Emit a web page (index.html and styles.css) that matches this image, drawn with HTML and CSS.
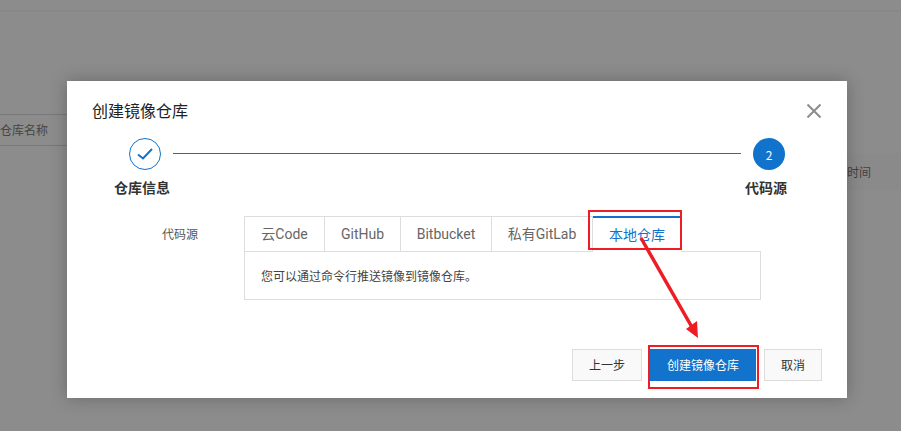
FILE: index.html
```html
<!DOCTYPE html>
<html lang="zh-CN">
<head>
<meta charset="utf-8">
<title>创建镜像仓库</title>
<link rel="stylesheet" href="styles.css">
</head>
<body>
<div class="page">
  <div class="page-top"></div>
  <div class="table-head">
    <span class="col-name">仓库名称</span>
  </div>
  <div class="table-row">
    <span class="col-time">时间</span>
  </div>
</div>
<div class="mask"></div>
<section class="modal">
  <header class="modal-head">
    <h1 class="modal-title">创建镜像仓库</h1>
    <svg class="close" width="14" height="14" viewBox="0 0 14 14"><path d="M0.5 0.5L13.5 13.5M13.5 0.5L0.5 13.5" fill="none" stroke="#8c8c8c" stroke-width="2"/></svg>
  </header>
  <div class="steps">
    <div class="step step-first">
      <div class="dot dot-done">
        <svg width="16" height="12" viewBox="0 0 16 12"><path d="M1 6.5L6 10.5L15 1" fill="none" stroke="#1173cb" stroke-width="2"/></svg>
      </div>
      <div class="step-name">仓库信息</div>
    </div>
    <div class="step-line"></div>
    <div class="step step-last">
      <div class="dot dot-now">2</div>
      <div class="step-name">代码源</div>
    </div>
  </div>
  <div class="form-row">
    <div class="form-label">代码源</div>
    <div class="form-main">
      <div class="tabs">
        <div class="tab">云Code</div>
        <div class="tab">GitHub</div>
        <div class="tab">Bitbucket</div>
        <div class="tab">私有GitLab</div>
        <div class="tab tab-active">本地仓库</div>
      </div>
      <div class="tab-panel">您可以通过命令行推送镜像到镜像仓库。</div>
    </div>
  </div>
  <footer class="modal-foot">
    <button class="btn">上一步</button>
    <button class="btn btn-primary">创建镜像仓库</button>
    <button class="btn">取消</button>
  </footer>
</section>
<div class="mark mark-tab"></div>
<div class="mark mark-btn"></div>
<svg class="arrow" width="901" height="431" viewBox="0 0 901 431">
  <path d="M641 238L693 329" fill="none" stroke="#ee1c25" stroke-width="3.5"/>
  <path d="M698 338L686 329L697 321Z" fill="#ee1c25"/>
</svg>
</body>
</html>
```
FILE: styles.css
```css
* { box-sizing: border-box; }
html, body { margin: 0; padding: 0; }
body {
  width: 901px;
  height: 431px;
  overflow: hidden;
  position: relative;
  font-family: "Noto Sans CJK SC", "Noto Sans", sans-serif;
  font-size: 12px;
  color: #333;
  background: #fff;
}
.page { height: 431px; }
.page-top { height: 12px; border-bottom: 2px solid #f7f7f7; }
.table-head {
  margin-top: 102px;
  width: 500px;
  height: 32px;
  border-top: 1px solid #dadada;
  border-bottom: 1px solid #dadada;
  display: flex;
  align-items: center;
}
.col-name { color: #808080; line-height: 30px; }
.table-row {
  margin: 7px 0 0 500px;
  height: 37px;
  display: flex;
  align-items: center;
  justify-content: flex-end;
  padding-right: 30px;
  background: #fcfcfc;
}
.col-time { color: #777; }
.mask {
  position: absolute;
  inset: 0;
  background: rgba(0, 0, 0, 0.45);
}
.modal {
  position: absolute;
  left: 67px;
  top: 81px;
  width: 780px;
  height: 317px;
  background: #fff;
  box-shadow: 0 0 16px rgba(0, 0, 0, 0.25);
  padding: 20px 25px 0;
  display: flex;
  flex-direction: column;
}
.modal-head {
  display: flex;
  justify-content: space-between;
  align-items: center;
  height: 20px;
}
.modal-title { margin: 0 0 2px; font-size: 16px; font-weight: 400; color: #222; line-height: 18px; }
.close { margin-right: 1px; }
.steps {
  display: flex;
  margin-top: 17px;
  padding-left: 22px;
  height: 58px;
}
.step { display: flex; flex-direction: column; flex: none; }
.step-first { width: 56px; }
.step-first .dot { margin-left: 15px; }
.step-last { width: 42px; }
.step-last .dot { margin-left: 8px; }
.step-line { width: 568px; height: 1px; background: #1173cb; margin: 15px 4px 0 3px; flex: none; }
.dot {
  width: 32px;
  height: 32px;
  border-radius: 50%;
  display: flex;
  align-items: center;
  justify-content: center;
  flex: none;
}
.dot-done { border: 1px solid #1173cb; }
.dot-now { background: #1173cb; color: #fff; font-size: 12px; }
.step-name { margin-top: 7px; font-size: 14px; font-weight: 700; color: #333; line-height: 20px; white-space: nowrap; }
.form-row { display: flex; margin-top: 20px; }
.form-label { width: 152px; text-align: right; padding-top: 9px; padding-right: 46px; line-height: 18px; color: #555; white-space: nowrap; flex: none; }
.form-main { width: 517px; flex: none; }
.tabs { position: relative; z-index: 1; display: grid; grid-template-columns: 81px 76px 91px 101px 88px; width: 437px; height: 36px; }
.tab {
  height: 36px;
  border: 1px solid #ddd;
  border-left: 0;
  font-family: Roboto, "Noto Sans CJK SC", sans-serif;
  font-size: 14px;
  line-height: 35px;
  text-align: center;
  color: #666;
  background: #fff;
  white-space: nowrap;
}
.tab:first-child { border-left: 1px solid #ddd; }
.tab-active { color: #1173cb; border-top: 2px solid #1173cb; border-bottom: 0; border-right: 0; line-height: 34px; }
.tab-panel {
  margin-top: -1px;
  height: 49px;
  border: 1px solid #ddd;
  padding: 0 16px;
  line-height: 48px;
  color: #444;
}
.modal-foot {
  display: flex;
  justify-content: flex-end;
  gap: 8px;
  margin-top: auto;
  margin-bottom: 17px;
}
.btn {
  height: 32px;
  min-width: 58px;
  padding: 0 16px;
  border: 1px solid #ddd;
  background: #f9f9f9;
  color: #333;
  font: inherit;
  line-height: 30px;
}
.btn-primary { background: #1173cb; border-color: #1173cb; color: #fff; width: 106px; padding: 0; }
.mark { position: absolute; z-index: 2; border: 2px solid #ee1c25; }
.mark-tab { left: 588px; top: 210px; width: 94px; height: 40px; }
.mark-btn { left: 648px; top: 345px; width: 111px; height: 44px; }
.arrow { position: absolute; z-index: 3; left: 0; top: 0; }
```
